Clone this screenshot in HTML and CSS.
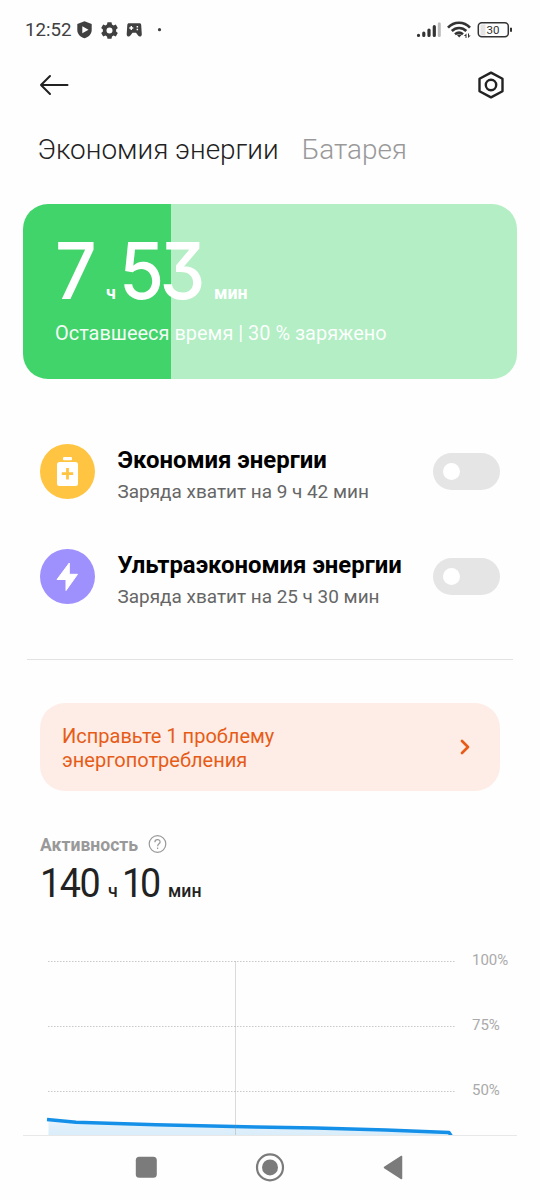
FILE: index.html
```html
<!DOCTYPE html>
<html lang="ru">
<head>
<meta charset="utf-8">
<title>Экономия энергии</title>
<link rel="stylesheet" href="styles.css">
</head>
<body>
<div class="screen">
  <div class="status">
    <span class="clock">12:52</span>
    <svg class="status-left" width="90" height="20" viewBox="0 0 90 20" fill="#404040">
      <path fill-rule="evenodd" d="M8.500 1.300 15.700 4V10c0 4-3 7.100-7.200 8.200-4.200-1.100-7.200-4.200-7.200-8.200V4zM6.300 6.300v7L12.500 9.800z"/>
      <path fill-rule="evenodd" d="M31.500 2.200h4l.5 2.300 1.600.9 2.200-.8 2 3.500-1.700 1.500v1.800l1.700 1.500-2 3.500-2.200-.8-1.600.9-.5 2.300h-4l-.5-2.300-1.600-.9-2.200.8-2-3.500 1.700-1.500V9.600l-1.700-1.500 2-3.500 2.200.8 1.600-.9zM33.500 7.500a3 3 0 1 0 0 6 3 3 0 0 0 0-6z"/>
      <path fill-rule="evenodd" d="M53 3.300h10.500c1 0 1.600.6 1.700 1.600l.6 9.300c0 2.600-2.500 2.900-3.700 1.400L60 12.800h-3.500l-2.100 2.800c-1.200 1.500-3.700 1.200-3.700-1.400l.6-9.300c.1-1 .7-1.600 1.700-1.600zM54.600 6v1.300h-1.300v1.400h1.300V10H56V8.700h1.300V7.300H56V6zM60.600 5.900v1.500h1.500V5.900zM60.600 8.700v1.500h1.500V8.700z"/>
      <circle cx="83.500" cy="9.700" r="1.600"/>
    </svg>
    <svg class="status-right" width="98" height="24" viewBox="0 0 98 24" fill="none" stroke="#333" stroke-linecap="round">
      <path stroke-width="3.200" d="M3.500 17.300v.2M8.800 15v2.500M14 12v5.500M19.300 8.700v8.800"/>
      <path stroke="#bbb" stroke-width="3" d="M24.300 5.700v11.800"/>
      <path stroke-width="2.600" stroke-linecap="butt" d="M33 9.700c6-6.600 16-6.600 22 0M36.800 13c4-4 10.500-4 14.500 0M40 16.200c2.400-2 5.600-2 8 0"/>
      <path fill="#333" stroke="none" d="M41.500 16.500h5.500l-2.800 3zM51.500 15.500v4.500h-1v-2h-1.700zM53 15.500v4.500l2.700-2.500H54v-2z"/>
      <rect x="65.500" y="6.500" width="5" height="11" fill="#e4e4e4" stroke="none"/>
      <rect x="63.300" y="4.800" width="30" height="14" rx="3.500" stroke-width="1.500"/>
      <path stroke-width="2" stroke-linecap="butt" d="M96 9.800v4"/>
      <text class="charge" x="78" y="16" text-anchor="middle">30</text>
    </svg>
  </div>

  <div class="toolbar">
    <svg width="30" height="22" viewBox="0 0 30 22" fill="none" stroke="#222" stroke-width="2" stroke-linecap="round" stroke-linejoin="round"><path d="M28.500 11H2M11 2 2 11l9 9"/></svg>
    <svg width="28" height="30" viewBox="0 0 28 30" fill="none" stroke="#222" stroke-width="2.400" stroke-linejoin="round"><path d="m14 2.600 11.500 6.200v12.400L14 27.400 2.500 21.200V8.800z"/><circle cx="14" cy="15" r="5.200"/></svg>
  </div>

  <div class="tabs"><span class="tab active">Экономия энергии</span><span class="tab">Батарея</span></div>

  <section class="hero">
    <div class="remaining"><span class="num hours">7</span><span class="unit">ч</span><span class="num minutes">53</span><span class="unit min">мин</span></div>
    <div class="caption">Оставшееся время | 30 % заряжено</div>
  </section>

  <section class="modes">
    <div class="mode">
      <svg width="55" height="55" viewBox="0 0 55 55"><circle cx="27.500" cy="27.500" r="27.500" fill="#ffc542"/><rect x="23" y="13" width="9" height="3.300" rx="1" fill="#fff"/><rect x="17" y="18" width="21" height="24" rx="2.500" fill="#fff"/><path d="M27.500 24v11.500M21.800 29.700h11.400" stroke="#ffc542" stroke-width="2.800"/></svg>
      <div class="mode-text"><div class="mode-title">Экономия энергии</div><div class="mode-sub">Заряда хватит на 9 ч 42 мин</div></div>
      <span class="toggle"></span>
    </div>
    <div class="mode">
      <svg width="55" height="55" viewBox="0 0 55 55"><circle cx="27.500" cy="27.500" r="27.500" fill="#9e90fd"/><path d="M29.300 14v11.300h8.200L26 41.500V30.500h-9z" fill="#fff" stroke="#fff" stroke-linejoin="round"/></svg>
      <div class="mode-text"><div class="mode-title">Ультраэкономия энергии</div><div class="mode-sub">Заряда хватит на 25 ч 30 мин</div></div>
      <span class="toggle"></span>
    </div>
  </section>

  <div class="divider"></div>

  <section class="alert">
    <div class="alert-text">Исправьте 1 проблему<br>энергопотребления</div>
    <svg width="12" height="20" viewBox="0 0 12 20" fill="none" stroke="#e65c17" stroke-width="2.700" stroke-linecap="round" stroke-linejoin="round"><path d="m3 3 6 6-6 6"/></svg>
  </section>

  <section class="activity">
    <div class="activity-label"><span>Активность</span>
      <svg width="19" height="19" viewBox="0 0 19 19" fill="none" stroke="#999" stroke-width="1.200"><circle cx="9.500" cy="9" r="8.300"/><path d="M6.900 7.200c0-3.500 5.200-3.500 5.200-.2 0 1.800-2.500 1.900-2.500 4.200M9.600 12.500v1.500"/></svg>
    </div>
    <div class="total"><span class="total-num">140</span><span class="total-unit h">ч</span><span class="total-num ten">10</span><span class="total-unit">мин</span></div>
  </section>

  <section class="chart">
    <svg width="412" height="185" viewBox="0 0 412 185" fill="none">
      <defs><linearGradient id="fade" x1="0" y1="0" x2="0" y2="1"><stop offset="0" stop-color="#e6f3fc"/><stop offset="1" stop-color="#d9edfa"/></linearGradient></defs>
      <path d="M3.500 170 31 172.500l80 2.500 100 2 141 4 52 2.500V185H3.500z" fill="url(#fade)"/>
      <path d="M3 11.500h408M3 76.500h408M3 141.500h408" stroke="#c8c8c8" stroke-dasharray="1.500 1.500"/>
      <path d="M2 169.500 31 172.200l80 2.600 100 2.200 60 1 70 2 63 2.500 4 6" stroke="#1590e8" stroke-width="3.400" stroke-linejoin="round"/>
      <path d="M190.500 11v174" stroke="#888" stroke-opacity=".3"/>
    </svg>
    <div class="scale"><span>100%</span><span>75%</span><span>50%</span></div>
  </section>

  <nav class="nav">
    <svg width="22" height="22" viewBox="0 0 22 22"><rect x=".8" y=".8" width="21" height="21" rx="3.500" fill="#7b7b7b"/></svg>
    <svg width="30" height="30" viewBox="0 0 30 30"><circle cx="15" cy="15.400" r="13" fill="none" stroke="#7b7b7b" stroke-width="2.200"/><circle cx="15" cy="15.400" r="8" fill="#7b7b7b"/></svg>
    <svg width="21" height="26" viewBox="0 0 21 26"><path d="M19.500 2.500v22L2.500 13.500z" fill="#7b7b7b" stroke="#7b7b7b" stroke-width="1.500" stroke-linejoin="round"/></svg>
  </nav>
</div>
</body>
</html>
```
FILE: styles.css
```css
* { box-sizing: border-box; }
body { margin: 0; background: #fefefe; font-family: Roboto, "Liberation Sans", sans-serif; }
svg { display: block; flex: none; }
.screen { width: 540px; height: 1200px; overflow: hidden; display: flex; flex-direction: column; background: #fefefe; }
.screen > * { flex: none; }

.status { height: 60px; display: flex; align-items: center; padding: 0 27px 0 25px; }
.clock { width: 51px; font-size: 18.700px; line-height: 60px; color: #404040; white-space: nowrap; }
.status-right { margin-left: auto; }
.charge { font-size: 11.500px; fill: #333; stroke: none; }

.toolbar { height: 50px; display: flex; align-items: center; justify-content: space-between; padding: 0 35px 0 39px; }

.tabs { height: 94.400px; padding-left: 37.500px; display: flex; gap: 23px; line-height: 79px; font-size: 27.900px; font-weight: 300; color: #999; white-space: nowrap; }
.tab.active { color: #222; }

.hero { margin: 0 23px; height: 175px; border-radius: 25px; padding: 18px 0 0 32px; color: #fff; background: linear-gradient(90deg, #40d46a 30%, #b3eec5 30%); }
.remaining { height: 90px; display: flex; align-items: baseline; line-height: 96px; white-space: nowrap; }
.num { font-family: Inter, Roboto, sans-serif; font-size: 79px; font-weight: 500; font-feature-settings: "cv09"; letter-spacing: -5px; transform: scaleX(.925); transform-origin: 0 50%; }
.hours { width: 51px; }
.minutes { width: 95px; margin-left: 1px; }
.unit { width: 12px; font-size: 17.800px; font-weight: 700; }
.unit.min { width: auto; }
.caption { line-height: 42px; font-size: 19.950px; white-space: nowrap; opacity: .95; }

.modes { padding: 39.600px 40px 0; height: 279.600px; }
.mode { height: 105px; display: flex; align-items: center; }
.mode-text { margin-left: 22.500px; padding-top: 10px; white-space: nowrap; }
.mode-title { font-size: 23.900px; line-height: 32px; font-weight: 700; color: #000; }
.mode-sub { font-size: 18.950px; line-height: 32px; color: #666; }
.toggle { margin-left: auto; width: 67px; height: 37px; border-radius: 19px; padding: 10px; background: #e5e5e5; }
.toggle::before { content: ""; display: block; width: 17px; height: 17px; border-radius: 50%; background: #fff; }

.divider { height: 1px; margin: 0 27px; background: #e2e2e2; }

.alert { margin: 43px 40px 0; height: 88px; border-radius: 25px; padding: 2px 29px 0 22px; display: flex; align-items: center; justify-content: space-between; background: #feede6; color: #e65c17; }
.alert-text { font-size: 20px; line-height: 24px; white-space: nowrap; }

.activity { padding: 39px 40px 0; height: 159px; }
.activity-label { height: 30px; display: flex; align-items: center; gap: 10px; font-size: 17.600px; font-weight: 700; color: #999; }
.total { display: flex; align-items: baseline; line-height: 47px; color: #222; white-space: nowrap; }
.total-num { width: 68px; font-size: 40.500px; letter-spacing: -1.500px; transform: scaleX(.93); transform-origin: 0 50%; }
.total-num.ten { width: 46px; letter-spacing: -3.500px; }
.total-unit { font-size: 17.700px; font-weight: 500; }
.total-unit.h { width: 14px; }

.chart { height: 185px; padding-left: 45px; display: flex; }
.scale { margin-left: 15px; display: flex; flex-direction: column; padding-top: 1px; font-size: 15px; color: #aaa; }
.scale span { flex: none; height: 65px; line-height: 18px; }

.nav { height: 65px; margin: 0 23px; border-top: 1px solid #e8e8e8; background: #fefefe; display: flex; align-items: center; padding: 0 0 1px 112px; }
.nav svg + svg { margin-left: 98px; }
.nav svg:last-child { margin-left: 97px; }
```
